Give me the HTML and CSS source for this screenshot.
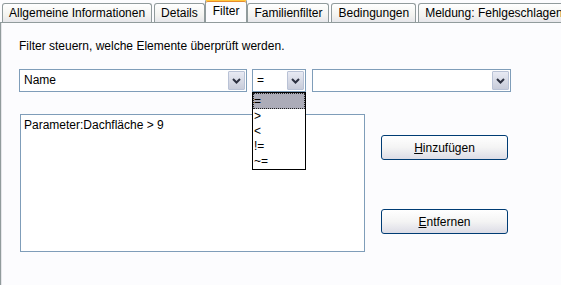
FILE: index.html
```html
<!DOCTYPE html>
<html lang="de">
<head>
  <meta charset="UTF-8">
  <title>Filter</title>
  <link rel="stylesheet" href="styles.css">
</head>
<body>
  <div class="tabs">
    <div class="tab">Allgemeine Informationen</div>
    <div class="tab">Details</div>
    <div class="tab active">Filter</div>
    <div class="tab">Familienfilter</div>
    <div class="tab">Bedingungen</div>
    <div class="tab">Meldung: Fehlgeschlagen</div>
  </div>

  <div class="panel">
    <p class="hint">Filter steuern, welche Elemente überprüft werden.</p>

    <div class="selects">
      <div class="combo combo-name">
        <span class="combo-value">Name</span>
        <span class="combo-arrow">
          <svg width="9" height="6" viewBox="0 0 9 6"><polyline points="1,1 4.5,4.5 8,1" fill="none" stroke="#2c3040" stroke-width="2"/></svg>
        </span>
      </div>
      <div class="combo combo-op">
        <span class="combo-value">=</span>
        <span class="combo-arrow">
          <svg width="9" height="6" viewBox="0 0 9 6"><polyline points="1,1 4.5,4.5 8,1" fill="none" stroke="#2c3040" stroke-width="2"/></svg>
        </span>
        <ul class="dropdown">
          <li class="selected">=</li>
          <li>&gt;</li>
          <li>&lt;</li>
          <li>!=</li>
          <li>~=</li>
        </ul>
      </div>
      <div class="combo combo-value-box">
        <span class="combo-value"></span>
        <span class="combo-arrow">
          <svg width="9" height="6" viewBox="0 0 9 6"><polyline points="1,1 4.5,4.5 8,1" fill="none" stroke="#2c3040" stroke-width="2"/></svg>
        </span>
      </div>
    </div>

    <div class="lower">
      <div class="listbox">
        <div class="list-item">Parameter:Dachfläche &gt; 9</div>
      </div>
      <div class="actions">
        <button class="btn"><u>H</u>inzufügen</button>
        <button class="btn"><u>E</u>ntfernen</button>
      </div>
    </div>
  </div>
</body>
</html>
```

FILE: styles.css
```css
body {
  margin: 0;
  padding: 0;
  background-color: #fcfcfe;
  color: black;
  font-family: "Liberation Sans", Arial, sans-serif;
  font-size: 12px;
  height: 285px;
  overflow: hidden;
}

/* tab strip */
.tabs {
  display: flex;
  align-items: flex-end;
  height: 22px;
  padding-left: 2px;
  gap: 2px;
  border-bottom: 1px solid #919b9c;
  white-space: nowrap;
  overflow: hidden;
}

.tab {
  height: 19px;
  line-height: 19px;
  padding: 0 6px;
  margin-bottom: -1px;
  border: 1px solid #919b9c;
  border-bottom: none;
  border-radius: 3px 3px 0 0;
  background: linear-gradient(#ffffff, #f3f3ef 60%, #e4e4ea);
}

.tab.active {
  height: 22px;
  line-height: 20px;
  padding: 0 7px;
  margin: 0 -2px -1px;
  position: relative;
  z-index: 1;
  background: #fcfcfe;
  border-top: 2px solid #ffc83c;
  box-shadow: inset 0 1px 0 #e68b2c;
}

/* panel */
.panel {
  height: 262px;
  border-left: 1px solid #919b9c;
  box-shadow: inset 1px 0 0 #e6e6ea;
  padding: 0 0 0 18px;
}

.hint {
  margin: 0;
  padding-top: 16px;
  height: 14px;
  line-height: 14px;
}

.selects {
  display: flex;
  gap: 5px;
  margin-top: 16px;
}

.combo {
  position: relative;
  display: flex;
  align-items: stretch;
  height: 21px;
  border: 1px solid #7f9db9;
  background: white;
}

.combo-name { width: 226px; }
.combo-op { width: 52px; }
.combo-value-box { width: 197px; margin-left: 1px; }

.combo-value {
  flex: 1;
  line-height: 21px;
  padding-left: 4px;
}

.combo-arrow {
  width: 15px;
  margin: 1px;
  display: flex;
  align-items: center;
  justify-content: center;
  border: 1px solid #b9c2d6;
  border-radius: 1px;
  background: linear-gradient(#e8eaf3, #c8ccda);
}

.dropdown {
  position: absolute;
  left: -1px;
  top: 22px;
  width: 52px;
  margin: 0;
  padding: 0;
  list-style: none;
  border: 1px solid black;
  background: white;
  z-index: 2;
}

.dropdown li {
  height: 15px;
  line-height: 15px;
  padding-left: 1px;
}

.dropdown li.selected {
  height: 14px;
  background: #acacb8;
  border: 1px dotted #222;
  padding-left: 0;
}

/* list and buttons */
.lower {
  display: flex;
  margin-top: 22px;
}

.listbox {
  width: 343px;
  height: 136px;
  margin-left: 1px;
  border: 1px solid #7f9db9;
  background: white;
}

.list-item {
  padding: 3px 0 0 3px;
  line-height: 15px;
}

.actions {
  display: flex;
  flex-direction: column;
  gap: 49px;
  margin: 21px 0 0 16px;
}

.btn {
  width: 127px;
  height: 25px;
  padding: 0;
  font-family: "Liberation Sans", Arial, sans-serif;
  font-size: 12px;
  color: black;
  border: 1px solid #003c74;
  border-radius: 3px;
  background: linear-gradient(#ffffff, #f4f4f4 50%, #dcdce6);
}
```
